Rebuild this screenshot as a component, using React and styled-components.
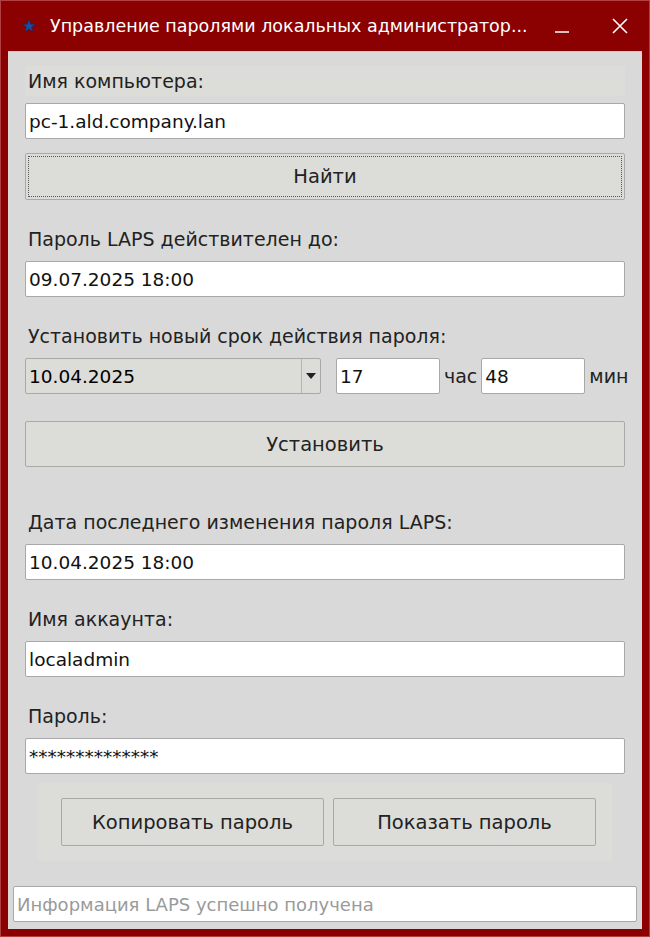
import React from 'react';
import styled, { createGlobalStyle } from 'styled-components';

const Global = createGlobalStyle`
  html, body { margin: 0; padding: 0; background: #8b0000; }
  body { font-family: "DejaVu Sans", "Noto Sans", sans-serif; }
`;

const Frame = styled.div`
  width: 650px;
  height: 937px;
  box-sizing: border-box;
  background: #8b0000;
  border: 1px solid #b24040;
  padding: 0 7px 7px 7px;
  display: flex;
  flex-direction: column;
`;

const TitleBar = styled.div`
  height: 50px;
  display: flex;
  align-items: center;
  color: #fff;
  font-size: 17.5px;
  padding: 0 0 0 14px;
  gap: 14px;
`;

const TitleText = styled.div`
  flex: 1;
  white-space: nowrap;
  overflow: hidden;
`;

const TitleBtn = styled.div`
  width: 44px;
  display: flex;
  justify-content: center;
  align-items: center;
`;

const Body = styled.div`
  flex: 1;
  background: #d9d9d9;
  border-top: 1px solid #c9c9c9;
  display: flex;
  flex-direction: column;
  padding: 14px 17px 0 17px;
`;

const Label = styled.div`
  height: 30px;
  display: flex;
  align-items: center;
  padding-left: 3px;
  font-size: 19px;
  color: #222;
  white-space: nowrap;
  background: ${p => p.$band ? '#dcdcd8' : 'transparent'};
  margin-top: ${p => p.$top || 0}px;
  margin-bottom: 7px;
`;

const Field = styled.div`
  height: 36px;
  box-sizing: border-box;
  background: #fff;
  border: 1px solid #a8a8a8;
  border-radius: 2px;
  display: flex;
  align-items: center;
  padding-left: 3px;
  font-size: 18.5px;
  color: ${p => p.$muted ? '#9a9a9a' : '#111'};
  width: ${p => p.$w ? p.$w + 'px' : 'auto'};
  flex: none;
  margin-top: ${p => p.$top || 0}px;
`;

const Button = styled.div`
  height: ${p => p.$h || 47}px;
  box-sizing: border-box;
  background: #dcdcd8;
  border: 1px solid #a9a9a5;
  border-radius: 2px;
  display: flex;
  align-items: center;
  justify-content: center;
  font-size: 19.5px;
  color: #222;
  margin-top: ${p => p.$top || 0}px;
  outline: ${p => p.$focus ? '1px dotted #555' : 'none'};
  outline-offset: -4px;
  flex: ${p => p.$flex ? 1 : 'none'};
`;

const Row = styled.div`
  display: flex;
  align-items: center;
  margin-top: ${p => p.$top || 0}px;
`;

const Combo = styled.div`
  width: 296px;
  height: 36px;
  flex: none;
  box-sizing: border-box;
  border: 1px solid #a8a8a5;
  border-radius: 2px;
  background: #dcdcd8;
  display: flex;
  font-size: 18.5px;
`;

const ComboText = styled.div`
  flex: 1;
  display: flex;
  align-items: center;
  padding-left: 3px;
  border-right: 1px solid #b5b5b2;
`;

const ComboArrow = styled.div`
  width: 18px;
  display: flex;
  align-items: center;
  justify-content: center;
`;

const Unit = styled.span`
  font-size: 19px;
  color: #222;
  margin: 0 4px;
  white-space: nowrap;
`;

const ButtonPanel = styled.div`
  margin: 9px 13px 0 13px;
  background: #dcdcd8;
  height: 78px;
  display: flex;
  align-items: center;
  gap: 9px;
  padding: 0 16px 0 23px;
  box-sizing: border-box;
`;

const Status = styled(Field)`
  margin: auto -12px 7px -12px;
  font-size: 18px;
`;

export default function App() {
  return (
    <>
      <Global />
      <Frame>
        <TitleBar>
          <svg width="14" height="14" viewBox="0 0 24 24">
            <path d="M12 1l3 8h8l-6.5 5 2.5 8-7-5-7 5 2.5-8L1 9h8z" fill="#1a4fa0" stroke="#0d2a60" strokeWidth="1" />
          </svg>
          <TitleText>Управление паролями локальных администратор...</TitleText>
          <TitleBtn>
            <svg width="16" height="16" viewBox="0 0 16 16"><line x1="1" y1="14" x2="15" y2="14" stroke="#fff" strokeWidth="1.5" /></svg>
          </TitleBtn>
          <TitleBtn>
            <svg width="16" height="16" viewBox="0 0 16 16"><path d="M1 1L15 15M15 1L1 15" stroke="#fff" strokeWidth="1.6" /></svg>
          </TitleBtn>
        </TitleBar>
        <Body>
          <Label $band>Имя компьютера:</Label>
          <Field>pc-1.ald.company.lan</Field>
          <Button $top={14} $focus>Найти</Button>

          <Label $top={24}>Пароль LAPS действителен до:</Label>
          <Field>09.07.2025 18:00</Field>

          <Label $top={24}>Установить новый срок действия пароля:</Label>
          <Row>
            <Combo>
              <ComboText>10.04.2025</ComboText>
              <ComboArrow>
                <svg width="10" height="6" viewBox="0 0 10 6"><path d="M0 0h10L5 6z" fill="#222" /></svg>
              </ComboArrow>
            </Combo>
            <Field $w={104} style={{ marginLeft: 15 }}>17</Field>
            <Unit>час</Unit>
            <Field $w={104}>48</Field>
            <Unit>мин</Unit>
          </Row>
          <Button $top={27} $h={46}>Установить</Button>

          <Label $top={40}>Дата последнего изменения пароля LAPS:</Label>
          <Field>10.04.2025 18:00</Field>

          <Label $top={24}>Имя аккаунта:</Label>
          <Field>localadmin</Field>

          <Label $top={24}>Пароль:</Label>
          <Field>**************</Field>

          <ButtonPanel>
            <Button $flex $h={48}>Копировать пароль</Button>
            <Button $flex $h={48}>Показать пароль</Button>
          </ButtonPanel>

          <Status $muted>Информация LAPS успешно получена</Status>
        </Body>
      </Frame>
    </>
  );
}
